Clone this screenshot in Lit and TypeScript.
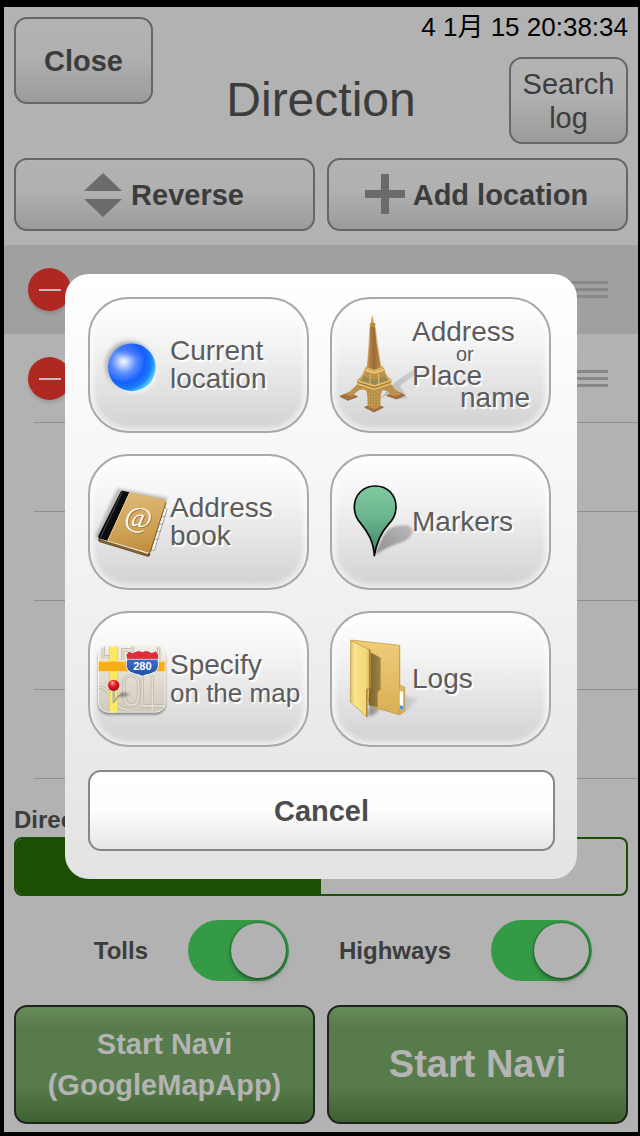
import { LitElement, html, css, svg, nothing } from "lit";
import { customElement, property, state } from "lit/decorators.js";

const globe = svg`
  <svg class="icon" viewBox="270 192 240 396" aria-hidden="true">
    <defs>
      <radialGradient id="gl" cx="0.33" cy="0.38" r="0.72">
        <stop offset="0" stop-color="#f4f8ff"/><stop offset="0.12" stop-color="#c3d6ff"/>
        <stop offset="0.35" stop-color="#5b8dff"/><stop offset="0.62" stop-color="#1560fb"/>
        <stop offset="0.8" stop-color="#1c7bff"/><stop offset="1" stop-color="#5ce0ff"/>
      </radialGradient>
      <filter id="gb" x="-30%" y="-30%" width="160%" height="160%"><feGaussianBlur stdDeviation="6"/></filter>
    </defs>
    <circle cx="388" cy="390" r="72" fill="#8a8a8a" opacity=".6" filter="url(#gb)"/>
    <circle cx="403" cy="405" r="70" fill="#fff" opacity=".6" filter="url(#gb)"/>
    <circle cx="395.5" cy="397" r="71.5" fill="url(#gl)"/>
    <ellipse cx="392" cy="346" rx="44" ry="16" fill="#1c52f4" opacity=".35" filter="url(#gb)"/>
  </svg>`;

const tower = svg`
  <svg class="icon" viewBox="36 192 240 396" aria-hidden="true">
    <defs>
      <linearGradient id="tb" x1="0" x2="1"><stop offset="0" stop-color="#d29c50"/><stop offset=".5" stop-color="#a06d3a"/><stop offset="1" stop-color="#cf9c58"/></linearGradient>
      <linearGradient id="ts" x1="0" x2="1"><stop offset="0" stop-color="#999" stop-opacity=".6"/><stop offset="1" stop-color="#aaa" stop-opacity=".4"/></linearGradient>
      <pattern id="tl" width="8" height="8" patternUnits="userSpaceOnUse"><path d="M0 0L8 8M8 0L0 8" stroke="#8b5f2c" stroke-width="2" opacity=".8"/></pattern>
      <filter id="tf" x="-20%" y="-20%" width="140%" height="140%"><feGaussianBlur stdDeviation="2"/></filter>
    </defs>
    <path d="M180 492L222 444L285 400L284 420L240 452L262 490L240 492L215 470Z" fill="url(#ts)" filter="url(#tf)"/>
    <path d="M60 484L86 473L112 485L84 496Z" fill="#a8703a" stroke="#7e5326" stroke-width="2"/>
    <path d="M200 482L228 468L254 481L230 492Z" fill="#a8703a" stroke="#7e5326" stroke-width="2"/>
    <path d="M134 517L163 505L190 517L162 531Z" fill="#a8703a" stroke="#7e5326" stroke-width="2"/>
    <path d="M134 404L193 404Q198 425 216 436L212 446Q222 462 242 477L227 483L212 480Q203 464 187 466Q181 472 181 513L163 522L143 513Q143 474 138 466Q123 459 110 470L97 484L76 480Q100 462 114 446L110 437Q130 422 134 404Z" fill="#d7ae5c"/>
    <path d="M134 404L193 404Q198 425 216 436L212 446Q222 462 242 477L227 483L212 480Q203 464 187 466Q181 472 181 513L163 522L143 513Q143 474 138 466Q123 459 110 470L97 484L76 480Q100 462 114 446L110 437Q130 422 134 404Z" fill="url(#tl)"/>
    <path d="M131 424L163 434L195 424L204 437L163 451L120 437Z" fill="#978a54"/>
    <path d="M132 412L116 440M194 412L211 440M150 416V446M176 416V446" stroke="#d9b263" stroke-width="4"/>
    <path d="M111 437L163 453L215 436M114 447L163 463L212 446" fill="none" stroke="#e8c36c" stroke-width="4"/>
    <path d="M112 442L163 458L214 441" fill="none" stroke="#8d6a33" stroke-width="2"/>
    <path d="M134 405L163 413L193 405L187 395L140 395Z" fill="#dab262" stroke="#a77b36" stroke-width="2"/>
    <path d="M150 274H165L170 325L183 396L163 404L141 396L148 330Z" fill="url(#tb)"/>
    <path d="M150 274H165L170 325L183 396L163 404L141 396L148 330Z" fill="url(#tl)" opacity=".6"/>
    <path d="M150 275L143 395M165 275L182 395" fill="none" stroke="#cf9c58" stroke-width="2"/>
    <path d="M134 405L163 414L193 405" fill="none" stroke="#f0cc78" stroke-width="4"/>
    <path d="M152 276L149 267L154 262V256L157 242L160 256V262L167 267L164 277Z" fill="#c18a35"/>
    <path d="M157 243V262" stroke="#d9a254" stroke-width="3"/>
  </svg>`;

const book = svg`
  <svg class="icon" viewBox="30 33 240 396" aria-hidden="true">
    <defs>
      <linearGradient id="bk" x1=".3" y1="0" x2=".4" y2="1"><stop offset="0" stop-color="#dfb876"/><stop offset=".6" stop-color="#cfa358"/><stop offset="1" stop-color="#c08e3e"/></linearGradient>
      <filter id="bb" x="-20%" y="-20%" width="140%" height="140%"><feGaussianBlur stdDeviation="5"/></filter>
    </defs>
    <path d="M112 130L262 158L210 322L44 276Z" fill="#777" opacity=".45" filter="url(#bb)"/>
    <path d="M246 175L261 194L223 316L205 312Z" fill="#f8f8f8" stroke="#777" stroke-width="2"/>
    <path d="M256 213L246 216M249 236L239 239M242 258L232 261M235 281L225 284" stroke="#777" stroke-width="2"/>
    <path d="M54 282Q54 291 60 292L203 335Q210 336 211 326L207 316L66 275Z" fill="#6b4c23"/>
    <path d="M60 283L204 327L207 319L66 276Z" fill="#ece9df"/>
    <path d="M60 287L203 331" stroke="#a27d44" stroke-width="2"/>
    <path d="M122 140Q125 136 131 138L148 142L83 287L59 281Q52 278 56 271Z" fill="#0c0c0e"/>
    <path d="M127 140L61 278" stroke="#4d4d50" stroke-width="3"/>
    <path d="M148 142L252 163Q260 165 258 173L214 317L209 324L83 287Z" fill="url(#bk)"/>
    <path d="M258 172L210 322" stroke="#7c5b28" stroke-width="3"/>
    <path d="M149 145L83 287" stroke="#e7c68d" stroke-width="3"/>
    <text class="at-back" x="136" y="248" transform="rotate(10 173 224)">@</text>
    <text class="at" x="134" y="246" transform="rotate(10 173 224)">@</text>
  </svg>`;

const marker = svg`
  <svg class="icon" viewBox="36 33 240 396" aria-hidden="true">
    <defs>
      <linearGradient id="mk" x1="0" y1="0" x2="0" y2="1"><stop offset="0" stop-color="#7fcaa0"/><stop offset=".45" stop-color="#6cb48d"/><stop offset="1" stop-color="#3e8464"/></linearGradient>
      <linearGradient id="ms" x1="1" y1="0" x2="0" y2="1"><stop offset="0" stop-color="#bbb"/><stop offset="1" stop-color="#8c8c8c"/></linearGradient>
      <filter id="mb" x="-20%" y="-20%" width="140%" height="140%"><feGaussianBlur stdDeviation="3"/></filter>
    </defs>
    <path d="M166 330Q182 280 204 254Q228 238 262 241Q282 248 275 268Q266 286 236 295Q200 306 166 330Z" fill="url(#ms)" filter="url(#mb)"/>
    <path d="M163 332C160 288 144 262 123 236C110 222 103 206 103 187C103 150 129 123 166 123C203 123 228 150 228 185C228 207 221 222 207 236C185 260 170 288 163 332Z" fill="url(#mk)" stroke="#050505" stroke-width="5" stroke-linejoin="round"/>
  </svg>`;

const roads =
  "M70 137V170H90M128 180V150H158V137M187 225V318H257M217 225V330M236 137V180M54 262Q80 262 86 280M154 226C130 226 130 250 131 272C132 300 138 316 154 316C172 316 176 300 176 272C176 250 176 226 154 226M112 310Q118 330 150 330";

const map = svg`
  <svg class="icon" viewBox="30 39 240 396" aria-hidden="true">
    <defs>
      <clipPath id="mc"><rect x="54" y="137" width="203" height="201" rx="30"/></clipPath>
      <linearGradient id="mg" x1="0" y1="0" x2="0" y2="1"><stop offset="0" stop-color="#f3eee5"/><stop offset="1" stop-color="#cfc9bd"/></linearGradient>
      <linearGradient id="sh" x1="0" y1="0" x2="0" y2="1"><stop offset="0" stop-color="#4f80d6"/><stop offset="1" stop-color="#1d4da6"/></linearGradient>
      <radialGradient id="pn" cx=".4" cy=".3" r=".7"><stop offset="0" stop-color="#ffb0a6"/><stop offset=".4" stop-color="#e8202a"/><stop offset="1" stop-color="#a50814"/></radialGradient>
      <filter id="mf" x="-20%" y="-20%" width="140%" height="140%"><feGaussianBlur stdDeviation="3"/></filter>
    </defs>
    <rect x="54" y="141" width="203" height="203" rx="30" fill="#666" opacity=".7" filter="url(#mf)"/>
    <g clip-path="url(#mc)">
      <rect x="54" y="137" width="203" height="201" fill="url(#mg)"/>
      <path d=${roads} fill="none" stroke="#b9b1a4" stroke-width="10"/>
      <path d=${roads} fill="none" stroke="#e2dcd1" stroke-width="6"/>
      <path d="M54 183H86L100 180L116 183H257V214H116L100 217L86 214H54Z" fill="#f7ae16"/>
      <path d="M54 185H86L100 182L116 185H257" fill="none" stroke="#ffd05a" stroke-width="4"/>
      <path d="M88 137H113V183H88ZM88 214H113V338H88Z" fill="#f9ea62"/>
      <path d="M88 137V183M113 137V183M88 214V338M113 214V338" stroke="#e2c84a" stroke-width="2"/>
    </g>
    <rect x="55.5" y="138.5" width="200" height="198" rx="29" fill="none" stroke="#fff" stroke-width="3" opacity=".6"/>
    <path d="M113 290L130 276L150 283L134 290Z" fill="#555" opacity=".55" filter="url(#mf)"/>
    <path d="M101 308L113 290L128 280" stroke="#777" stroke-width="4" opacity=".6" fill="none"/>
    <rect x="97" y="268" width="7" height="40" rx="3" fill="#a0a0a0"/>
    <path d="M99 269V305" stroke="#e8e8e8" stroke-width="2"/>
    <circle cx="101" cy="256" r="17" fill="url(#pn)"/>
    <path d="M147 154Q158 162 168 154Q178 150 187 156Q197 150 206 154Q216 162 228 153L236 165Q232 174 235 188Q240 214 210 222Q194 225 187 229Q180 225 165 222Q134 214 139 188Q143 174 138 165Z" fill="url(#sh)" stroke="#f4f4f4" stroke-width="3"/>
    <path d="M147 155Q158 163 168 155Q178 151 187 157Q197 151 206 155Q216 163 227 154L235 165Q232 172 234 177H141Q142 171 139 165Z" fill="#e22c36"/>
    <path d="M141 178H234" stroke="#f4f4f4" stroke-width="2"/>
    <text class="route" x="187" y="209">280</text>
  </svg>`;

const folder = svg`
  <svg class="icon" viewBox="36 39 240 396" aria-hidden="true">
    <defs>
      <linearGradient id="ff" x1="0" y1="0" x2="1" y2="0"><stop offset="0" stop-color="#e3bf5d"/><stop offset=".2" stop-color="#f8e28c"/><stop offset=".8" stop-color="#f3d877"/><stop offset="1" stop-color="#cda546"/></linearGradient>
      <linearGradient id="fk" x1="0" y1="0" x2="0" y2="1"><stop offset="0" stop-color="#f0cd7b"/><stop offset="1" stop-color="#d9ae55"/></linearGradient>
      <linearGradient id="fd" x1="0" y1="0" x2="1" y2="0"><stop offset="0" stop-color="#5c4b22" stop-opacity=".75"/><stop offset="1" stop-color="#a38643"/></linearGradient>
      <linearGradient id="fs" x1="0" y1="0" x2="1" y2="0"><stop offset="0" stop-color="#777" stop-opacity=".8"/><stop offset="1" stop-color="#999" stop-opacity=".2"/></linearGradient>
      <filter id="fb" x="-30%" y="-30%" width="160%" height="160%"><feGaussianBlur stdDeviation="4"/></filter>
    </defs>
    <path d="M236 340L254 288L297 294L262 330ZM142 348L150 315L180 328L160 345Z" fill="url(#fs)" filter="url(#fb)"/>
    <path d="M93 120L239 136V255L254 262V334L239 344L150 319Z" fill="url(#fk)" stroke="#b88f3f" stroke-width="2"/>
    <path d="M239 137V344" stroke="#c39a45" stroke-width="2"/>
    <path d="M151 157L182 173V268L173 277V322L146 316Z" fill="url(#fd)"/>
    <path d="M239 272L249 276V328L239 324Z" fill="#fff"/>
    <path d="M239 316L249 318V329L239 325Z" fill="#3f8ae6"/>
    <path d="M92 121L151 150V263L142 268V352L91 306Z" fill="url(#ff)" stroke="#b88f3f" stroke-width="2"/>
    <path d="M149 150V263L140 268V350" fill="none" stroke="#a37c2d" stroke-width="3"/>
    <path d="M105 129V316" stroke="#fbe9a3" stroke-width="3" opacity=".7"/>
  </svg>`;

@customElement("source-tile")
class SourceTile extends LitElement {
  @property({ attribute: false }) icon: unknown = nothing;

  static styles = css`
    :host { display: block; min-width: 0; }
    .tile {
      box-sizing: border-box;
      display: flex;
      align-items: center;
      width: 100%;
      height: 136px;
      margin: 0;
      padding: 0;
      border: 2px solid #a9a9a9;
      border-radius: 40px;
      background: linear-gradient(#fff, #f3f3f3 35%, #d1d1d1);
      box-shadow: inset 0 0 6px 3px rgba(255, 255, 255, 0.75);
      font: 28px/28px "Liberation Sans", Arial, sans-serif;
      color: #5c5c5c;
      text-shadow: 2px 2px 1px #fff;
      text-align: left;
      white-space: nowrap;
    }
    .text { display: block; }
    .icon { flex: none; width: 80px; height: 132px; overflow: visible; }
    .at, .at-back {
      font: italic 88px "Liberation Serif", "Times New Roman", serif;
      fill: #fffdf6;
      text-shadow: none;
    }
    .at-back { fill: #8f6a2b; }
    .route {
      font: bold 33px "Liberation Sans", Arial, sans-serif;
      fill: #fff;
      text-anchor: middle;
      text-shadow: none;
    }
  `;

  render() {
    return html`<button class="tile" type="button">${this.icon}<span class="text"><slot></slot></span></button>`;
  }
}

@customElement("source-dialog")
class SourceDialog extends LitElement {
  static styles = css`
    :host { display: block; }
    .dialog {
      box-sizing: border-box;
      width: 512px;
      max-width: 100%;
      padding: 23px 22px 28px 23px;
      border-radius: 24px;
      background: linear-gradient(#fff, #f3f3f3 45%, #e3e3e3);
      font-family: "Liberation Sans", Arial, sans-serif;
    }
    .tiles {
      display: grid;
      grid-template-columns: 1fr 1fr;
      gap: 21px;
      padding-right: 4px;
      margin-bottom: 23px;
    }
    .line { display: block; }
    .tight { line-height: 22px; }
    .or { padding-left: 44px; font-size: 20px; }
    .name { padding-left: 48px; }
    .small { font-size: 26px; }
    .cancel {
      box-sizing: border-box;
      display: block;
      width: 100%;
      height: 81px;
      border: 2px solid #8a8587;
      border-radius: 13px;
      background: linear-gradient(#fff, #fdfdfd 50%, #e6e6e6);
      font: bold 29px/34px "Liberation Sans", Arial, sans-serif;
      color: #4c4c4c;
    }
  `;

  render() {
    return html`
      <section class="dialog" role="dialog" aria-modal="true">
        <div class="tiles">
          <source-tile .icon=${globe}><span class="line">Current</span><span class="line">location</span></source-tile>
          <source-tile .icon=${tower}>
            <span class="line tight">Address</span><span class="line tight or">or</span>
            <span class="line tight">Place</span><span class="line tight name">name</span>
          </source-tile>
          <source-tile .icon=${book}><span class="line">Address</span><span class="line">book</span></source-tile>
          <source-tile .icon=${marker}><span class="line">Markers</span></source-tile>
          <source-tile .icon=${map}><span class="line">Specify</span><span class="line small">on the map</span></source-tile>
          <source-tile .icon=${folder}><span class="line">Logs</span></source-tile>
        </div>
        <button class="cancel" type="button">Cancel</button>
      </section>
    `;
  }
}

@customElement("app-root")
class AppRoot extends LitElement {
  @state() private stops = [true, true, false, false, false, false];

  static styles = css`
    :host {
      display: block;
      font-family: "Liberation Sans", Arial, "Noto Sans CJK JP", sans-serif;
      color: #3c3c3c;
    }
    .screen {
      box-sizing: border-box;
      position: relative;
      min-height: 100vh;
      border: solid #000;
      border-width: 7px 2px 4px 4px;
      padding: 10px 0 8px;
      background: #b2b2b2;
    }
    .inset { padding: 0 10px; }
    .header { display: grid; grid-template-columns: 1fr auto 1fr; }
    .title {
      align-self: end;
      margin: 0;
      padding-bottom: 16px;
      font-size: 48px;
      line-height: 56px;
      font-weight: normal;
    }
    .right { display: flex; flex-direction: column; align-items: flex-end; gap: 20px; }
    .clock { font-size: 26px; line-height: 20px; color: #000; white-space: nowrap; }
    .btn {
      box-sizing: border-box;
      display: flex;
      align-items: center;
      justify-content: center;
      margin: 0;
      padding: 0;
      border: 2px solid #666;
      border-radius: 13px;
      background: linear-gradient(#b3b3b3, #b0b0b0 45%, #9b9b9b);
      font: bold 29px/34px "Liberation Sans", Arial, sans-serif;
      color: #3c3c3c;
    }
    .close { width: 139px; height: 87px; }
    .search { width: 119px; height: 87px; font-weight: normal; }
    .pair { display: grid; grid-template-columns: 1fr 1fr; column-gap: 12px; }
    .actions { padding-top: 14px; padding-bottom: 14px; }
    .action { height: 73px; gap: 8px; padding-right: 2px; }
    .glyph { width: 40px; height: 44px; }
    .list { list-style: none; margin: 0; padding: 0; }
    .row {
      box-sizing: border-box;
      display: flex;
      align-items: center;
      justify-content: space-between;
      height: 89px;
      padding: 0 30px 0 24px;
      background: linear-gradient(#8f8f8f, #8f8f8f) 30px 100% / 100% 1px no-repeat;
    }
    .row:first-child { background: #a0a0a0; }
    .remove {
      display: grid;
      place-items: center;
      width: 43px;
      height: 43px;
      padding: 0;
      border: 0;
      border-radius: 50%;
      background: #b02822;
      box-shadow: 0 3px 3px rgba(0, 0, 0, 0.12);
    }
    .minus { width: 22px; height: 2px; background: #c4bcbc; }
    .grip { display: grid; gap: 4px; width: 44px; }
    .bar { height: 3px; background: #88888c; }
    .caption {
      padding: 27px 10px 3px;
      font-size: 24px;
      line-height: 28px;
      font-weight: bold;
    }
    .segments {
      display: grid;
      grid-template-columns: 1fr 1fr;
      margin: 0 10px;
      border: 2px solid #1a4f04;
      border-radius: 8px;
      overflow: hidden;
    }
    .segment {
      height: 55px;
      border: 0;
      padding: 0 0 4px;
      background: none;
      font: 24px/28px "Liberation Sans", Arial, sans-serif;
      color: #1a4f04;
    }
    .segment.on { background: #1a4f04; color: #b2b2b2; }
    .options { display: grid; grid-template-columns: 285px 1fr; padding: 24px 46px 24px 0; }
    .option {
      display: flex;
      align-items: center;
      justify-content: flex-end;
      gap: 40px;
      font-size: 24px;
      line-height: 28px;
      font-weight: bold;
    }
    .switch {
      appearance: none;
      display: flex;
      box-sizing: border-box;
      justify-content: flex-end;
      width: 101px;
      height: 61px;
      margin: 0;
      padding: 3px;
      border-radius: 31px;
      background: #359a46;
    }
    .switch::before {
      content: "";
      width: 55px;
      height: 55px;
      border-radius: 50%;
      background: #b2b2b2;
      box-shadow: 0 3px 5px rgba(0, 0, 0, 0.35), 0 0 1px 1px rgba(0, 60, 10, 0.3);
    }
    .start {
      height: 119px;
      border-color: #222;
      background: linear-gradient(#658c57, #587b4b 18%, #587b4b 68%, #3d6330);
      color: #b4b4b4;
      line-height: 41px;
    }
    .big { font-size: 38px; }
    .overlay {
      position: absolute;
      inset: 0;
      display: grid;
      place-items: center;
      padding-top: 14px;
    }
  `;

  private renderStop(filled: boolean) {
    return html`<li class="row">
      ${filled
        ? html`<button class="remove" type="button" aria-label="Remove"><span class="minus"></span></button>
            <span class="grip"><span class="bar"></span><span class="bar"></span><span class="bar"></span></span>`
        : nothing}
    </li>`;
  }

  render() {
    return html`
      <main class="screen">
        <header class="header inset">
          <button class="btn close" type="button">Close</button>
          <h1 class="title">Direction</h1>
          <div class="right">
            <time class="clock">4 1月 15 20:38:34</time>
            <button class="btn search" type="button">Search<br />log</button>
          </div>
        </header>
        <div class="pair actions inset">
          <button class="btn action" type="button">
            <svg class="glyph" viewBox="0 0 40 44" aria-hidden="true">
              <path d="M20 0L39 18H1ZM1 26H39L20 44Z" fill="#6b6b6b" />
            </svg>
            Reverse
          </button>
          <button class="btn action" type="button">
            <svg class="glyph" viewBox="0 0 40 44" aria-hidden="true">
              <path d="M16 1H24V17H40V25H24V41H16V25H0V17H16Z" fill="#6b6b6b" />
            </svg>
            Add location
          </button>
        </div>
        <ul class="list">${this.stops.map((s) => this.renderStop(s))}</ul>
        <div class="caption">Direction</div>
        <div class="segments">
          <button class="segment on" type="button">Driving</button>
          <button class="segment" type="button">Walking</button>
        </div>
        <div class="options">
          <label class="option">Tolls<input class="switch" type="checkbox" role="switch" checked /></label>
          <label class="option">Highways<input class="switch" type="checkbox" role="switch" checked /></label>
        </div>
        <div class="pair inset">
          <button class="btn start" type="button">Start Navi<br />(GoogleMapApp)</button>
          <button class="btn start big" type="button">Start Navi</button>
        </div>
        <div class="overlay"><source-dialog></source-dialog></div>
      </main>
    `;
  }
}
